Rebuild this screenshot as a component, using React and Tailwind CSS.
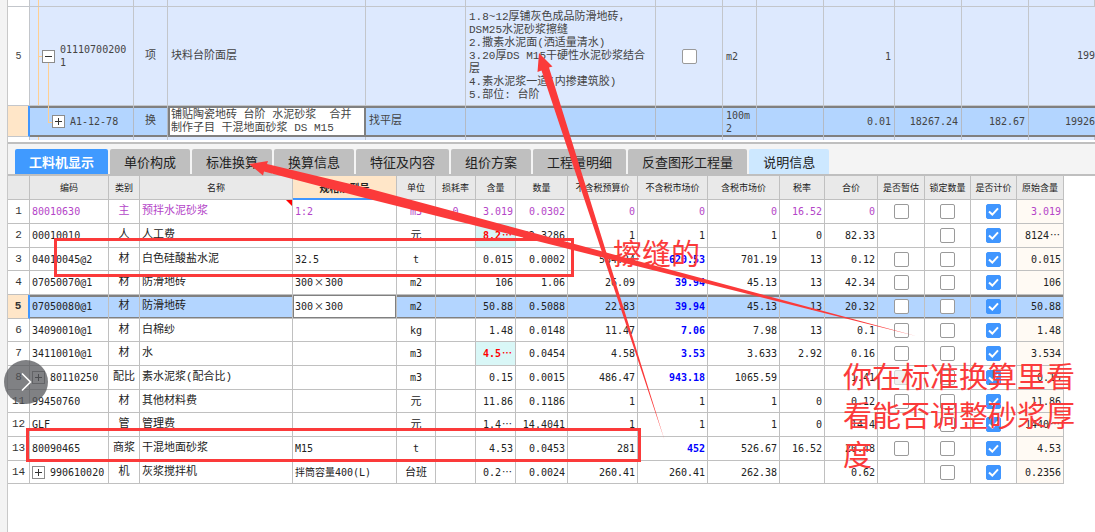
import { useState } from "react";
import clsx from "clsx";

const tabs = [
  "工料机显示",
  "单价构成",
  "标准换算",
  "换算信息",
  "特征及内容",
  "组价方案",
  "工程量明细",
  "反查图形工程量",
  "说明信息",
];

const columns = [
  { title: "", width: "w-[22px]" },
  { title: "编码", width: "w-[79px]" },
  { title: "类别", width: "w-[31px]" },
  { title: "名称", width: "w-[153px]" },
  { title: "规格及型号", width: "w-[104px]", active: true },
  { title: "单位", width: "w-[39px]" },
  { title: "损耗率", width: "w-[40px]" },
  { title: "含量", width: "w-[40px]" },
  { title: "数量", width: "w-[52px]" },
  { title: "不含税预算价", width: "w-[70px]" },
  { title: "不含税市场价", width: "w-[70px]" },
  { title: "含税市场价", width: "w-[72px]" },
  { title: "税率", width: "w-[45px]" },
  { title: "合价", width: "w-[53px]" },
  { title: "是否暂估", width: "w-[47px]" },
  { title: "锁定数量", width: "w-[46px]" },
  { title: "是否计价", width: "w-[46px]" },
  { title: "原始含量", width: "w-[47px]" },
];

// est: true = empty box, false = no box, "off" = disabled box
const rows = [
  { no: 1, code: "80010630", kind: "主", name: "预拌水泥砂浆", spec: "1:2", unit: "m3", loss: "0", qty: "3.019", total: "0.0302", budget: "0", market: "0", taxed: "0", rate: "16.52", sum: "0", est: true, origin: "3.019", main: true },
  { no: 2, code: "00010010", kind: "人", name: "人工费", spec: "", unit: "元", qty: "8.2⋯", total: "82.3286", budget: "1", market: "1", taxed: "1", rate: "0", sum: "82.33", est: false, origin: "8124⋯", changed: true },
  { no: 3, code: "04010045@2", kind: "材", name: "白色硅酸盐水泥", spec: "32.5", unit: "t", qty: "0.015", total: "0.0002", budget: "584.34", market: "620.53", taxed: "701.19", rate: "13", sum: "0.12", est: true, origin: "0.015", priced: true },
  { no: 4, code: "07050070@1", kind: "材", name: "防滑地砖", spec: "300×300", unit: "m2", qty: "106", total: "1.06", budget: "26.09", market: "39.94", taxed: "45.13", rate: "13", sum: "42.34", est: true, origin: "106", priced: true },
  { no: 5, code: "07050080@1", kind: "材", name: "防滑地砖", spec: "300×300", unit: "m2", qty: "50.88", total: "0.5088", budget: "22.83", market: "39.94", taxed: "45.13", rate: "13", sum: "20.32", est: true, origin: "50.88", priced: true, selected: true },
  { no: 6, code: "34090010@1", kind: "材", name: "白棉纱", spec: "", unit: "kg", qty: "1.48", total: "0.0148", budget: "11.47", market: "7.06", taxed: "7.98", rate: "13", sum: "0.1", est: true, origin: "1.48", priced: true },
  { no: 7, code: "34110010@1", kind: "材", name: "水", spec: "", unit: "m3", qty: "4.5⋯", total: "0.0454", budget: "4.58", market: "3.53", taxed: "3.633", rate: "2.92", sum: "0.16", est: true, origin: "3.534", priced: true, changed: true },
  { no: 8, code: "80110250", kind: "配比", name: "素水泥浆(配合比)", spec: "", unit: "m3", qty: "0.15", total: "0.0015", budget: "486.47", market: "943.18", taxed: "1065.59", rate: "", sum: "1.41", est: "off", origin: "0.15", priced: true, tree: true },
  { no: 11, code: "99450760", kind: "材", name: "其他材料费", spec: "", unit: "元", qty: "11.86", total: "0.1186", budget: "1", market: "1", taxed: "1", rate: "0", sum: "0.12", est: true, origin: "11.86" },
  { no: 12, code: "GLF", kind: "管", name: "管理费", spec: "", unit: "元", qty: "1.4⋯", total: "14.4041", budget: "1", market: "1", taxed: "1", rate: "0", sum: "14.4", est: false, origin: "1440⋯" },
  { no: 13, code: "80090465", kind: "商浆", name: "干混地面砂浆", spec: "M15", unit: "t", qty: "4.53", total: "0.0453", budget: "281", market: "452", taxed: "526.67", rate: "16.52", sum: "20.48", est: true, origin: "4.53", priced: true },
  { no: 14, code: "990610020", kind: "机", name: "灰浆搅拌机", spec: "拌筒容量400(L)", unit: "台班", qty: "0.2⋯", total: "0.0024", budget: "260.41", market: "260.41", taxed: "262.38", rate: "", sum: "0.62", est: false, origin: "0.2356", tree: true },
];

const topWidths = [
  "w-[22px]",
  "w-[104px]",
  "w-[34px]",
  "w-[198px]",
  "w-[100px]",
  "w-[190px]",
  "w-[67px]",
  "w-[34px]",
  "w-[67px]",
  "w-[71px]",
  "w-[67px]",
  "w-[67px]",
  "w-auto",
];

const monoFont = "font-['DejaVu_Sans_Mono','Noto_Sans_CJK_SC',monospace]";
const textFont = "font-['Liberation_Mono','Noto_Sans_CJK_SC',monospace]";

// the dots and the times sign take a full character cell
function Value({ children }) {
  return children.split(/([⋯×])/).map((part, i) =>
    part === "⋯" || part === "×" ? (
      <span key={i} className="inline-block w-3 text-center font-['Noto_Sans_CJK_SC',sans-serif] leading-none">
        {part}
      </span>
    ) : (
      part
    )
  );
}

function Checkbox({ label, defaultChecked = false, disabled = false }) {
  return (
    <span className="relative mx-auto block size-[15px]">
      <input
        type="checkbox"
        aria-label={label}
        defaultChecked={defaultChecked}
        disabled={disabled}
        className="peer block size-[15px] appearance-none rounded-xs border border-[#9a9a9a] bg-white checked:border-[#4096ff] checked:bg-[#4096ff] disabled:border-[#d5d5d5] disabled:bg-[#f0f0f0]"
      />
      <svg
        viewBox="0 0 15 15"
        className="pointer-events-none absolute inset-0 hidden size-[15px] peer-checked:block"
        fill="none"
        stroke="#fff"
        strokeWidth="2"
      >
        <path d="M3 7.5 L6.3 10.6 L12 4.4" />
      </svg>
    </span>
  );
}

function TreeButton({ open = false }) {
  return (
    <button
      type="button"
      aria-label={open ? "收起" : "展开"}
      className="relative grid size-[13px] shrink-0 place-items-center border border-[#8c8c8c] bg-white"
    >
      <svg viewBox="0 0 9 9" className="size-[9px]" stroke="#333" strokeWidth="1">
        <path d={open ? "M1 4.5 H8" : "M1 4.5 H8 M4.5 1 V8"} />
      </svg>
    </button>
  );
}

function BillTable() {
  const cell = "relative border-r border-b border-[#c3c6cb] px-[3px] py-0 overflow-hidden";
  const picked =
    "relative border-r border-[#b4bac4] px-[3px] py-0 bg-[#b3d5ff] shadow-[inset_0_2px_0_#808080,inset_0_-2px_0_#808080]";
  return (
    <table
      className={clsx(
        "w-full table-fixed border-separate border-spacing-0 bg-[#dde9fe] text-[11px] leading-[13px] text-[#444]",
        textFont
      )}
    >
      <colgroup>
        {topWidths.map((w, i) => (
          <col key={i} className={w} />
        ))}
      </colgroup>
      <tbody>
        <tr className="h-[7px]">
          {topWidths.map((w, i) => (
            <td key={i} className={clsx(cell, i === 0 && "bg-white")}>
              {i === 1 && <span className="absolute inset-y-0 left-2 border-l border-[#ffcf92]" />}
            </td>
          ))}
        </tr>
        <tr className="h-[99px]">
          <td className={clsx(cell, "bg-white text-center text-[10px]")}>5</td>
          <td className={cell}>
            <span className="absolute inset-y-0 left-2 border-l border-[#ffcf92]" />
            <span className="absolute top-1/2 left-2 w-2 border-t border-[#ffcf92]" />
            <span className="absolute top-1/2 bottom-0 left-[18px] border-l border-[#ffcf92]" />
            <div className={clsx("flex items-center gap-[5px] pl-[9px] text-[10px]", monoFont)}>
              <TreeButton open />
              <span>
                01110700200
                <br />1
              </span>
            </div>
          </td>
          <td className={clsx(cell, "text-center")}>项</td>
          <td className={cell}>块料台阶面层</td>
          <td className={cell}></td>
          <td className={clsx(cell, "whitespace-nowrap")}>
            1.8~12厚铺灰色成品防滑地砖，
            <br />
            DSM25水泥砂浆擦缝
            <br />
            2.撒素水泥面(洒适量清水)
            <br />
            3.20厚DS M15干硬性水泥砂浆结合
            <br />
            层
            <br />
            4.素水泥浆一道(内掺建筑胶)
            <br />
            5.部位: 台阶
          </td>
          <td className={cell}>
            <Checkbox label="块料台阶面层" />
          </td>
          <td className={clsx(cell, "text-[10px]", monoFont)}>m2</td>
          <td className={cell}></td>
          <td className={clsx(cell, "text-right text-[10px]", monoFont)}>1</td>
          <td className={cell}></td>
          <td className={cell}></td>
          <td className="border-b border-[#c3c6cb] p-0 text-right">
            <span className={clsx("text-[10px]", monoFont)}>199</span>
          </td>
        </tr>
        <tr className="h-[31px]">
          <td className="border-r-2 border-b border-[#4096ff] border-b-[#c3c6cb] bg-[#ffe6c8] p-0"></td>
          <td className={picked}>
            <span className="absolute top-0 left-[18px] h-4 border-l border-[#ffcf92]" />
            <span className="absolute top-4 left-[18px] w-2 border-t border-[#ffcf92]" />
            <div className={clsx("flex items-center gap-[5px] pl-[19px] text-[10px]", monoFont)}>
              <TreeButton />
              <span>A1-12-78</span>
            </div>
          </td>
          <td className={clsx(picked, "text-center")}>换</td>
          <td className="bg-white px-[3px] py-0 whitespace-pre shadow-[inset_0_0_0_2px_#808080]">
            {"铺贴陶瓷地砖 台阶 水泥砂浆  合并\n制作子目 干混地面砂浆 DS M15"}
          </td>
          <td className={picked}>找平层</td>
          <td className={picked}></td>
          <td className={picked}></td>
          <td className={clsx(picked, "text-[10px]", monoFont)}>
            100m
            <br />2
          </td>
          <td className={picked}></td>
          <td className={clsx(picked, "text-right text-[10px]", monoFont)}>0.01</td>
          <td className={clsx(picked, "text-right text-[10px]", monoFont)}>18267.24</td>
          <td className={clsx(picked, "text-right text-[10px]", monoFont)}>182.67</td>
          <td className="bg-[#b3d5ff] p-0 text-right shadow-[inset_0_2px_0_#808080,inset_0_-2px_0_#808080]">
            <span className={clsx("text-[10px]", monoFont)}>19926</span>
          </td>
        </tr>
        <tr className="h-[3px]">
          {topWidths.map((w, i) => (
            <td key={i} className={clsx("relative border-r border-[#c3c6cb] p-0", i === 0 && "bg-white")}>
              {i === 1 && <span className="absolute inset-y-0 left-2 border-l border-[#ffcf92]" />}
            </td>
          ))}
        </tr>
      </tbody>
    </table>
  );
}

function TabBar() {
  const [active, setActive] = useState(0);
  return (
    <div className="mt-[2px] flex gap-[2px] border-y-2 border-[#bfbfbf] bg-[#f4f4f4] pt-[5px] pl-[7px] font-['Noto_Sans_CJK_SC',sans-serif] text-[13px] leading-[25px] whitespace-nowrap">
      {tabs.map((tab, i) => (
        <button
          key={tab}
          type="button"
          onClick={() => setActive(i)}
          className={clsx(
            "h-[25px] rounded-t-xs px-[14px]",
            i === active
              ? "bg-[#409aff] font-bold text-white"
              : i === tabs.length - 1
                ? "bg-[#cde8ff] text-[#222]"
                : "bg-[#bfbfbf] text-[#222]"
          )}
        >
          {tab}
        </button>
      ))}
    </div>
  );
}

function MaterialRow({ row, index }) {
  const cell = clsx(
    "relative border-r border-b border-[#c0c0c0] px-[2px] py-0 whitespace-nowrap",
    row.selected && "bg-[#b3d5ff] shadow-[inset_0_2px_0_#808080,inset_0_-1px_0_#808080]"
  );
  const num = clsx(cell, "text-right text-[10px]", monoFont);
  const text = clsx(cell, "text-[11px]", textFont);
  return (
    <tr className={clsx(index % 3 === 2 ? "h-[23px]" : "h-6", row.main ? "text-[#b445c8]" : "text-[#222]")}>
      <th
        className={clsx(
          "border-b border-b-[#c0c0c0] p-0 text-center text-[11px] text-[#333]",
          textFont,
          row.selected
            ? "border-r-2 border-r-[#4096ff] bg-[#ffe6c8] font-bold"
            : "border-r border-r-[#c0c0c0] font-normal"
        )}
      >
        {row.no}
      </th>
      <td className={clsx(cell, "text-[10px]", monoFont)}>
        <div className="flex items-center gap-[5px]">
          {row.tree && <TreeButton />}
          <span>{row.code}</span>
        </div>
      </td>
      <td className={clsx(text, "text-center")}>{row.kind}</td>
      <td className={text}>
        {row.name}
        {row.main && (
          <svg viewBox="0 0 6 6" className="absolute top-0 right-0 size-[6px]">
            <path d="M0 0 H6 V6 Z" fill="#f00" />
          </svg>
        )}
      </td>
      <td
        className={clsx(
          "border-r border-b border-[#c0c0c0] px-[2px] py-0 text-[10px] whitespace-nowrap",
          monoFont,
          row.selected && "bg-white shadow-[inset_0_0_0_1px_#808080]"
        )}
      >
        <Value>{row.spec}</Value>
      </td>
      <td className={clsx(cell, "text-center", row.unit.charCodeAt(0) > 255 ? "text-[11px]" : "text-[10px]", monoFont)}>
        {row.unit}
      </td>
      <td className={clsx(cell, "text-center text-[10px]", monoFont)}>{row.loss}</td>
      <td className={clsx(num, row.changed && "bg-[#d9f7f7] font-bold text-[#f00]")}>
        <Value>{row.qty}</Value>
      </td>
      <td className={num}>{row.total}</td>
      <td className={num}>{row.budget}</td>
      <td className={clsx(num, row.priced && "font-bold text-[#00f]")}>{row.market}</td>
      <td className={num}>{row.taxed}</td>
      <td className={num}>{row.rate}</td>
      <td className={num}>{row.sum}</td>
      <td className={cell}>
        {row.est && <Checkbox label={`是否暂估 ${row.no}`} disabled={row.est === "off"} />}
      </td>
      <td className={cell}>
        <Checkbox label={`锁定数量 ${row.no}`} />
      </td>
      <td className={cell}>
        <Checkbox label={`是否计价 ${row.no}`} defaultChecked />
      </td>
      <td className={clsx(num, !row.selected && "bg-[#fffaf4]")}>
        <Value>{row.origin}</Value>
      </td>
    </tr>
  );
}

function MaterialTable() {
  return (
    <table className="w-[1056px] table-fixed border-separate border-spacing-0 bg-white leading-[15px]">
      <thead>
        <tr className="h-6">
          {columns.map((col) => (
            <th
              key={col.title}
              className={clsx(
                col.width,
                "border-r border-b border-[#c0c0c0] p-0 text-center font-['Noto_Sans_CJK_SC',sans-serif] whitespace-nowrap text-[#222]",
                col.active
                  ? "border-b-2 border-b-[#4096ff] bg-[#ffe6c8] text-[10px] font-bold"
                  : "bg-[#e9e9e9] text-[9px] font-normal"
              )}
            >
              {col.title}
            </th>
          ))}
        </tr>
      </thead>
      <tbody>
        {rows.map((row, i) => (
          <MaterialRow key={row.no} row={row} index={i} />
        ))}
      </tbody>
    </table>
  );
}

// red marks drawn freely over the sheet
function Annotations() {
  return (
    <div className="pointer-events-none absolute inset-0 font-['Noto_Sans_CJK_SC',sans-serif] text-[29px] leading-[39px] text-[#fb3a3a]">
      <div className="absolute top-[238px] left-[54px] h-[39px] w-[520px] border-3 border-[#fb3a3a]" />
      <div className="absolute top-[428px] left-[26px] h-[34px] w-[615px] border-3 border-[#fb3a3a]" />
      <svg width="1095" height="532" viewBox="0 0 1095 532" className="absolute top-0 left-0" fill="#fb3a3a">
        <path d="M249 164 L268 161 L267 164 L365 187.5 L916 336 L365 198 L264 171.5 L263 175.5 Z" />
        <path d="M539 53 L552.5 66.5 L549 67.5 L664.5 440 L541.5 70.5 L537.5 72 Z" />
      </svg>
      <p className="absolute top-[233px] left-[613px] whitespace-nowrap">擦缝的</p>
      <p className="absolute top-[356px] left-[843px] w-[236px]">你在标准换算里看看能否调整砂浆厚度</p>
    </div>
  );
}

export default function App() {
  return (
    <div className="relative flex min-h-screen overflow-hidden bg-white">
      <div className="w-2 shrink-0 border-r border-[#c8c8c8] bg-[#f3f3f3]" />
      <main className="min-w-0 flex-1">
        <BillTable />
        <TabBar />
        <MaterialTable />
      </main>
      <button
        type="button"
        aria-label="下一张"
        className="absolute top-[360px] left-1 grid size-11 place-items-center rounded-full bg-[#55575b]/75"
      >
        <svg viewBox="0 0 20 20" className="size-5" fill="none" stroke="#fff" strokeWidth="1.6">
          <path d="M6 1.5 L14.5 10 L6 18.5" />
        </svg>
      </button>
      <Annotations />
    </div>
  );
}
